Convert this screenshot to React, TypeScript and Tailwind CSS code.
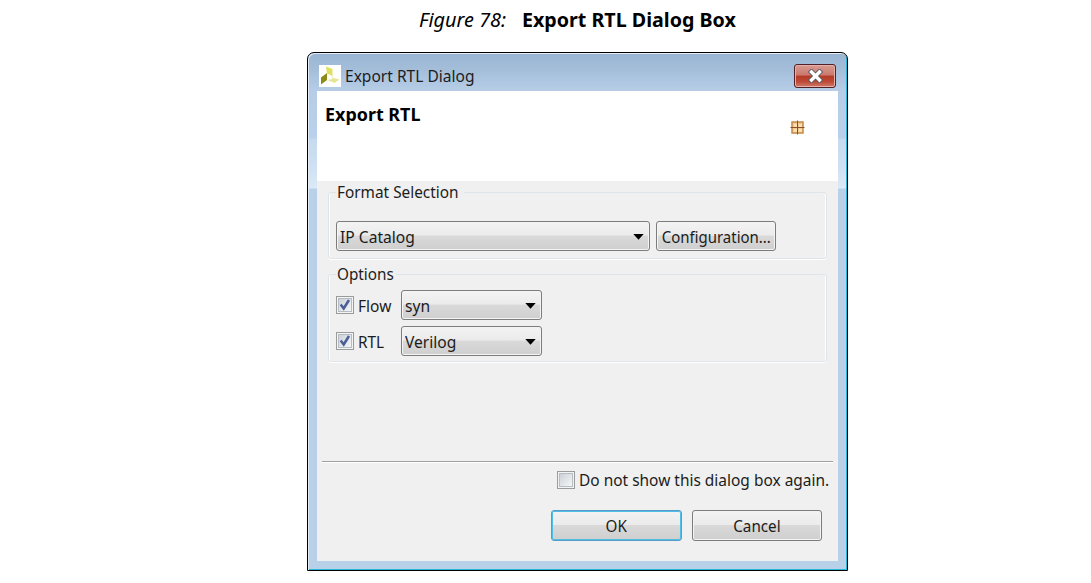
import type { ReactNode } from "react";

function Caret() {
  return (
    <svg className="h-[6px] w-[11px] shrink-0" viewBox="0 0 11 6">
      <path d="M0.3 0h10.4L5.5 5.8z" fill="#000" />
    </svg>
  );
}

const face =
  "flex h-[30px] items-center rounded-[3px] border border-[#7c7c7c] bg-[linear-gradient(#f3f3f3_0%,#ebebeb_47%,#d9d9d9_50%,#cfcfcf_100%)] shadow-[inset_0_0_0_1px_#f4f4f4]";

function Select({ value, className }: { value: string; className: string }) {
  return (
    <button className={`${face} justify-between pl-[3px] pr-[5px] pt-px ${className}`}>
      <span className="origin-left scale-x-[0.975]">{value}</span>
      <Caret />
    </button>
  );
}

function Check({ checked }: { checked?: boolean }) {
  return (
    <span className="mb-px flex size-[18px] shrink-0 items-center justify-center border border-[#9a9b9b] bg-[#f4f4f4]">
      <span className="flex size-[14px] items-center justify-center border border-[#b6bcc4] bg-[linear-gradient(135deg,#cdd2d8,#f5f6f7)]">
        {checked && (
          <svg className="size-[12px] shrink-0" viewBox="0 0 12 12" fill="none">
            <path d="M1.7 5.5l3 4L10 1" stroke="#4a5f97" strokeWidth="2.5" />
          </svg>
        )}
      </span>
    </span>
  );
}

function Group({ title, className, children }: { title: ReactNode; className: string; children: ReactNode }) {
  return (
    <fieldset
      className={`ml-[11px] w-[499px] rounded-[3px] border border-[#dde4ea] pl-[7px] shadow-[inset_-1px_0_0_#fff,inset_1px_0_0_#fff,0_1px_0_#fff] ${className}`}
    >
      <legend className="h-[22px] pl-px leading-[22px]">{title}</legend>
      {children}
    </fieldset>
  );
}

export default function App() {
  return (
    <div className="h-[583px] w-[1091px] overflow-hidden bg-white font-['Noto_Sans','Open_Sans',sans-serif] text-[16px] leading-[22px] whitespace-nowrap text-[#1c1c1c]">
      <div className="flex h-[52px] pl-[419px] pt-[7px] text-[19px] leading-[26px] text-black">
        <span className="w-[103px] shrink-0 italic">
          <span className="inline-block origin-left scale-x-[1.045]">Figure 78:</span>
        </span>
        <span className="inline-block origin-left scale-x-[1.034] font-bold">Export RTL Dialog Box</span>
      </div>
      <div className="ml-[307px] h-[519px] w-[541px] rounded-t-[7px] border border-black bg-[linear-gradient(#99b4d1_0px,#a5bfdb_18px,#b7cde7_38px,#b9d1ea_85px,#c6daef_86px,#cfe1f2_115px,#dce9f6_135px,#b9d0e9_136px)] shadow-[inset_1px_1px_0_#e5eef5,inset_-1px_-1px_0_#25b8d8]">
        <div className="flex h-[38px] items-start pl-[11px] pr-[11px] pt-[11px]">
          <svg className="mt-px size-[22px] shrink-0" viewBox="0 0 22 22">
            <path d="M0 0h22v22H0z" fill="#fff" />
            <path d="M7 1.5l6.5 2.5v7L8 8.5z" fill="#dfdf62" />
            <path d="M2 12.5l6-4.500v7l-6 4.500z" fill="#8c8b16" />
            <path d="M13 10.500l1.500 2.500 6 1.500-5 3.500-7-3 5-1z" fill="#e5e693" />
          </svg>
          <span className="ml-[4px] mt-[1px] inline-block origin-left scale-x-[0.972]">Export RTL Dialog</span>
          <button className="ml-auto flex h-[24px] w-[42px] items-center justify-center rounded-[3px] border border-[#53202a] bg-[linear-gradient(#d99b91_0%,#cb796d_46%,#b53a27_50%,#bd4935_75%,#d1796b_100%)] shadow-[inset_0_0_0_1px_#e5b0a7]">
            <svg className="h-[14px] w-[17px]" viewBox="0 0 17 14">
              <path d="M4.500 3l8 8M12.500 3l-8 8" stroke="#535866" strokeWidth="5.200" strokeLinecap="square" />
              <path d="M4.500 3l8 8M12.500 3l-8 8" stroke="#fff" strokeWidth="3.400" strokeLinecap="square" />
            </svg>
          </button>
        </div>
        <div className="ml-[9px] h-[470px] w-[521px] bg-[#f0f0f0]">
          <div className="flex h-[90px] justify-between bg-white">
            <span className="ml-[8px] mt-[12px] inline-block origin-left scale-x-[0.995] text-[18px] font-bold text-black">Export RTL</span>
            <svg className="mr-[33px] mt-[29px] size-[15px]" viewBox="0 0 15 15">
              <path d="M2 2h11v11H2z" fill="#f3cb90" stroke="#c48a4b" strokeWidth="1.500" />
              <path d="M4 4h3v3H4zM9 4h3v3H9zM4 9h3v3H4zM9 9h3v3H9z" fill="#fbe0b4" />
              <path d="M7.500 0.500v14M0.500 7.500h14" stroke="#8a4f2b" strokeWidth="1" />
            </svg>
          </div>
          <Group className="h-[78px]" title={<span className="inline-block origin-left scale-x-[0.96]">Format Selection</span>}>
            <div className="mt-[18px] flex gap-[6px]">
              <Select value="IP Catalog" className="w-[314px]" />
              <button className={`${face} w-[120px] justify-center pt-px`}>
                <span className="scale-x-[0.935]">Configuration...</span>
              </button>
            </div>
          </Group>
          <Group className="mt-[4px] h-[99px]" title={<span className="inline-block origin-left scale-x-[0.955]">Options</span>}>
            <div className="mt-[5px] flex items-center">
              <Check checked />
              <span className="w-[47px] pl-[4px] pt-px"><span className="inline-block origin-left scale-x-[0.97]">Flow</span></span>
              <Select value="syn" className="w-[141px]" />
            </div>
            <div className="mt-[6px] flex items-center">
              <Check checked />
              <span className="w-[47px] pl-[4px] pt-px"><span className="inline-block origin-left scale-x-[0.96]">RTL</span></span>
              <Select value="Verilog" className="w-[141px]" />
            </div>
          </Group>
          <div className="ml-[5px] mt-[99px] h-[2px] w-[511px] border-t border-[#a0a0a0] bg-white" />
          <div className="ml-[240px] mt-[6px] flex items-center">
            <Check />
            <span className="ml-[4px] inline-block origin-left scale-x-[0.966]">Do not show this dialog box again.</span>
          </div>
          <div className="ml-[234px] mt-[19px] flex gap-[10px]">
            <button className={`${face} h-[31px]! w-[131px] justify-center border-[#5a9bc8]! pt-px shadow-[inset_0_0_0_1px_#4cbfe6]!`}>
              <span className="scale-x-[0.95]">OK</span>
            </button>
            <button className={`${face} h-[31px]! w-[130px] justify-center pt-px`}>
              <span className="scale-x-[0.95]">Cancel</span>
            </button>
          </div>
        </div>
      </div>
    </div>
  );
}
